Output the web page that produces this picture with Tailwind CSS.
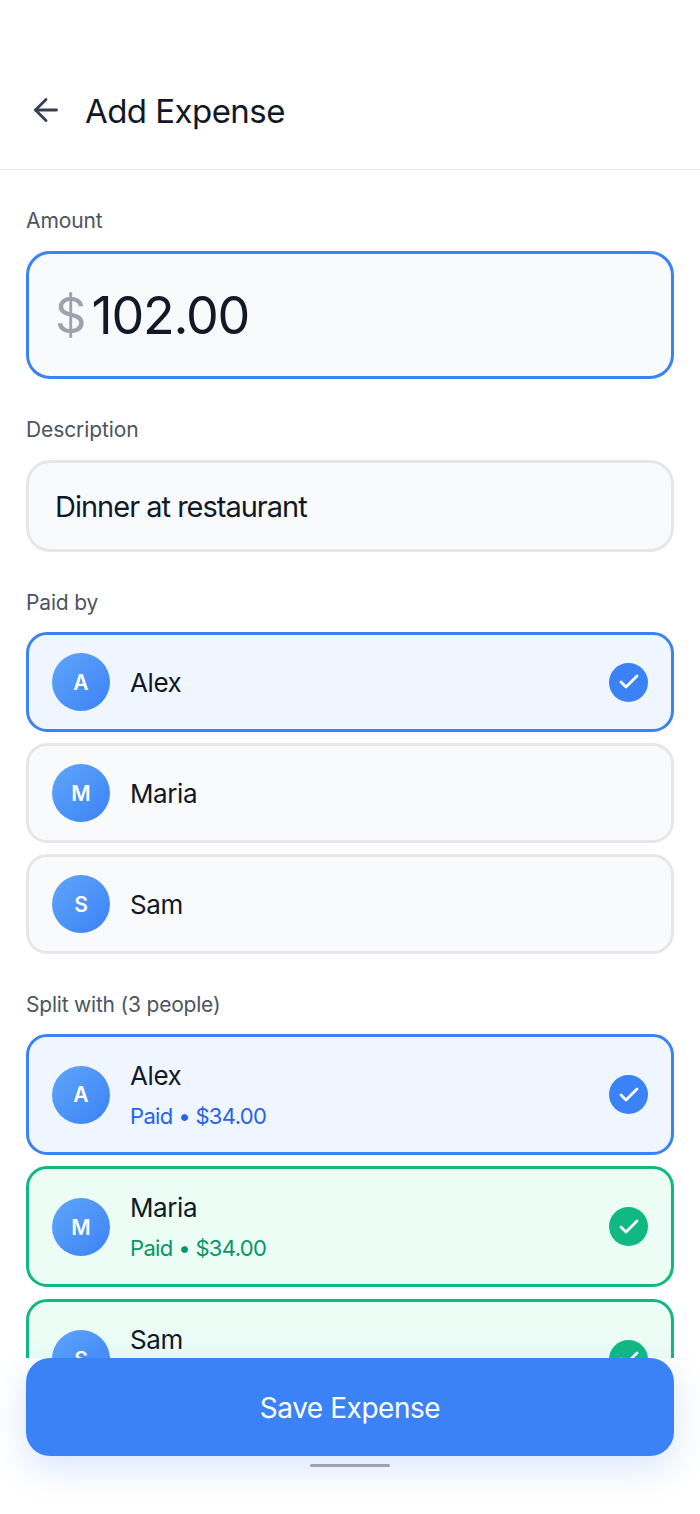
<!doctype html>
<html lang="en">
  <head>
    <meta charset="UTF-8" />
    <meta name="viewport" content="width=device-width, initial-scale=1.0" />
    <title>Add Expense</title>
    <script src="https://cdn.jsdelivr.net/npm/@tailwindcss/browser@4"></script>
  </head>
  <body class="bg-white font-['Inter',sans-serif] text-[#111827]">
    <div class="flex h-[1514px] w-[700px] flex-col overflow-hidden">
      <header class="flex h-[170px] shrink-0 items-start border-b border-[#e5e7eb] pl-[28px] pt-[92px]">
        <svg class="h-[36px] w-[36px] text-[#374151]" viewBox="0 0 24 24" fill="none" stroke="currentColor" stroke-width="1.9" stroke-linecap="round" stroke-linejoin="round"><path d="M19 12H5" /><path d="M12 19l-7-7 7-7" /></svg>
        <h1 class="ml-[21px] text-[33px] leading-[38px] font-normal tracking-[-0.55px]">Add Expense</h1>
      </header>

      <main class="h-[1188px] shrink-0 overflow-hidden px-[26px] pt-[38px]">
        <label class="block text-[21px] leading-[26px] tracking-[-0.1px] text-[#4b5563]">Amount</label>
        <div class="mt-[17px] flex h-[128px] items-center rounded-[24px] border-[3px] border-[#3b82f6] bg-[#f9fafb] pl-[26px]">
          <span class="pt-[1px] text-[49px] text-[#9ca3af]">$</span>
          <span class="ml-[5px] pt-[1px] text-[52px] font-normal tracking-[-1.2px]">102.00</span>
        </div>

        <label class="mt-[38px] block text-[21px] leading-[26px] tracking-[-0.1px] text-[#4b5563]">Description</label>
        <div class="mt-[17px] flex h-[92px] items-center rounded-[24px] border-[3px] border-[#e5e7eb] bg-[#f9fafb] pl-[26px] pt-[1px] text-[29px] tracking-[-1px]">Dinner at restaurant</div>

        <label class="mt-[38px] block text-[21px] leading-[26px] tracking-[-0.15px] text-[#4b5563]">Paid by</label>
        <div class="mt-[16px] flex flex-col gap-[11px]">
          <div class="flex h-[100px] items-center rounded-[21px] border-[3px] border-[#3b82f6] bg-[#eff6ff] px-[23px]">
            <div class="flex h-[58px] w-[58px] shrink-0 items-center justify-center rounded-full bg-linear-to-br from-[#60a5fa] to-[#3b82f6] pt-[1px] text-[21px] font-semibold text-white">A</div>
            <span class="ml-[20px] flex-1 pt-[1px] text-[26px] font-normal tracking-[-0.4px]">Alex</span>
            <div class="flex h-[39px] w-[39px] items-center justify-center rounded-full bg-[#3b82f6]">
              <svg class="h-[24px] w-[24px] text-white" viewBox="0 0 24 24" fill="none" stroke="currentColor" stroke-width="2.8" stroke-linecap="round" stroke-linejoin="round"><path d="M20 6L9 17l-5-5" /></svg>
            </div>
          </div>
          <div class="flex h-[100px] items-center rounded-[21px] border-[3px] border-[#e5e7eb] bg-[#f9fafb] px-[23px]">
            <div class="flex h-[58px] w-[58px] shrink-0 items-center justify-center rounded-full bg-linear-to-br from-[#60a5fa] to-[#3b82f6] pt-[1px] text-[21px] font-semibold text-white">M</div>
            <span class="ml-[20px] flex-1 pt-[1px] text-[26px] font-normal tracking-[-0.4px]">Maria</span>
          </div>
          <div class="flex h-[100px] items-center rounded-[21px] border-[3px] border-[#e5e7eb] bg-[#f9fafb] px-[23px]">
            <div class="flex h-[58px] w-[58px] shrink-0 items-center justify-center rounded-full bg-linear-to-br from-[#60a5fa] to-[#3b82f6] pt-[1px] text-[21px] font-semibold text-white">S</div>
            <span class="ml-[20px] flex-1 pt-[1px] text-[26px] font-normal tracking-[-0.4px]">Sam</span>
          </div>
        </div>

        <label class="mt-[38px] block text-[21px] leading-[26px] tracking-[-0.2px] text-[#4b5563]">Split with (3 people)</label>
        <div class="mt-[16px] flex flex-col gap-[11.4px]">
          <div class="flex h-[121px] items-center rounded-[21px] border-[3px] border-[#3b82f6] bg-[#eff6ff] px-[23px]">
            <div class="flex h-[58px] w-[58px] shrink-0 items-center justify-center rounded-full bg-linear-to-br from-[#60a5fa] to-[#3b82f6] pt-[1px] text-[21px] font-semibold text-white">A</div>
            <div class="ml-[20px] flex-1">
              <div class="text-[26px] leading-[36px] font-normal tracking-[-0.4px]">Alex</div>
              <div class="mt-[6px] text-[22px] leading-[32px] tracking-[-0.65px] text-[#2563eb]">Paid • $34.00</div>
            </div>
            <div class="flex h-[39px] w-[39px] items-center justify-center rounded-full bg-[#3b82f6]">
              <svg class="h-[24px] w-[24px] text-white" viewBox="0 0 24 24" fill="none" stroke="currentColor" stroke-width="2.8" stroke-linecap="round" stroke-linejoin="round"><path d="M20 6L9 17l-5-5" /></svg>
            </div>
          </div>
          <div class="flex h-[121px] items-center rounded-[21px] border-[3px] border-[#10b981] bg-[#ecfdf5] px-[23px]">
            <div class="flex h-[58px] w-[58px] shrink-0 items-center justify-center rounded-full bg-linear-to-br from-[#60a5fa] to-[#3b82f6] pt-[1px] text-[21px] font-semibold text-white">M</div>
            <div class="ml-[20px] flex-1">
              <div class="text-[26px] leading-[36px] font-normal tracking-[-0.4px]">Maria</div>
              <div class="mt-[6px] text-[22px] leading-[32px] tracking-[-0.65px] text-[#059669]">Paid • $34.00</div>
            </div>
            <div class="flex h-[39px] w-[39px] items-center justify-center rounded-full bg-[#10b981]">
              <svg class="h-[24px] w-[24px] text-white" viewBox="0 0 24 24" fill="none" stroke="currentColor" stroke-width="2.8" stroke-linecap="round" stroke-linejoin="round"><path d="M20 6L9 17l-5-5" /></svg>
            </div>
          </div>
          <div class="flex h-[121px] items-center rounded-[21px] border-[3px] border-[#10b981] bg-[#ecfdf5] px-[23px]">
            <div class="flex h-[58px] w-[58px] shrink-0 items-center justify-center rounded-full bg-linear-to-br from-[#60a5fa] to-[#3b82f6] pt-[1px] text-[21px] font-semibold text-white">S</div>
            <div class="ml-[20px] flex-1">
              <div class="text-[26px] leading-[36px] font-normal tracking-[-0.4px]">Sam</div>
              <div class="mt-[6px] text-[22px] leading-[32px] tracking-[-0.65px] text-[#059669]">Paid • $34.00</div>
            </div>
            <div class="flex h-[39px] w-[39px] items-center justify-center rounded-full bg-[#10b981]">
              <svg class="h-[24px] w-[24px] text-white" viewBox="0 0 24 24" fill="none" stroke="currentColor" stroke-width="2.8" stroke-linecap="round" stroke-linejoin="round"><path d="M20 6L9 17l-5-5" /></svg>
            </div>
          </div>
        </div>
      </main>

      <footer class="relative z-10 flex flex-col items-center px-[26px]">
        <button class="h-[98px] w-full rounded-[24px] bg-[#3b82f6] pt-[1px] text-[28px] font-normal tracking-[-0.45px] text-white shadow-[0_12px_36px_rgba(59,130,246,0.2)]">Save Expense</button>
        <div class="mt-[8px] h-[3px] w-[80px] rounded-full bg-[#9ca3af]"></div>
      </footer>
    </div>
  </body>
</html>
